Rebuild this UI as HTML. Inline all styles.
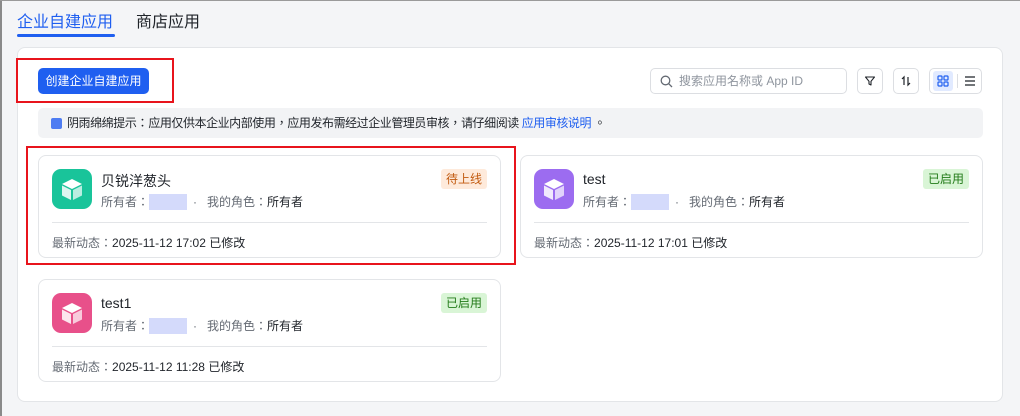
<!DOCTYPE html>
<html><head><meta charset="utf-8"><style>
*{box-sizing:border-box;margin:0;padding:0}
body{width:1020px;height:416px;background:#f4f5f7;font-family:"Liberation Sans","Noto Sans CJK TC",sans-serif;position:relative;overflow:hidden}
.a{position:absolute}
.p{display:inline-block;width:12px;text-align:center}
.tab{font-size:16px;top:8px}
.main{left:17px;top:47px;width:986px;height:355px;background:#fff;border:1px solid #e3e5e8;border-radius:8px}
.red{border:2px solid #e8141c}
.btn{left:38px;top:68px;width:111px;height:26px;background:#1f5ff0;border-radius:5px;color:#fff;font-size:12px;text-align:center;line-height:26px}
.sq{width:26px;height:26px;border:1px solid #dcdee2;border-radius:5px;background:#fff;display:flex;align-items:center;justify-content:center}
.card{width:463px;height:103px;border:1px solid #e3e5e8;border-radius:8px;background:#fff}
.ic{left:13px;top:13px;width:40px;height:40px;border-radius:9px;display:flex;align-items:center;justify-content:center}
.ttl{left:62px;top:15px;font-size:14px;color:#1f2329}
.own{left:62px;top:37px;font-size:12px;color:#646a73;display:flex;align-items:center;white-space:nowrap}
.blur{display:inline-block;width:38px;height:16px;background:#d4dafb;margin:0 6px 0 0}
.div{left:13px;right:13px;top:66px;height:1px;background:#e3e5e8}
.last{left:13px;top:78px;font-size:12px;color:#646a73;white-space:nowrap}
.last b{font-weight:normal;color:#1f2329}
.bd{right:13px;top:13px;height:20px;padding:0 5px;font-size:12px;line-height:20px;border-radius:3px}
</style></head><body>
<div class="a" style="left:0;top:0;width:2px;height:416px;background:#8a8a8a"></div>
<div class="a" style="left:0;top:0;width:1020px;height:1px;background:#9a9a9a"></div>
<div class="a tab" style="left:17px;color:#1f5ff0">企业自建应用</div>
<div class="a" style="left:17px;top:34px;width:98px;height:3px;background:#1f5ff0;border-radius:2px"></div>
<div class="a tab" style="left:136px;color:#1f2329">商店应用</div>
<div class="a main"></div>
<div class="a red" style="left:16px;top:58px;width:158px;height:45px"></div>
<div class="a btn">创建企业自建应用</div>
<div class="a" style="left:650px;top:68px;width:197px;height:26px;border:1px solid #dcdee2;border-radius:5px;font-size:12px;color:#8f959e;line-height:24px;padding-left:28px">
<svg class="a" style="left:9px;top:6px" width="13" height="13" viewBox="0 0 13 13"><circle cx="5.5" cy="5.5" r="4.3" fill="none" stroke="#646a73" stroke-width="1.3"/><path d="M8.7 8.7L12 12" stroke="#646a73" stroke-width="1.3"/></svg>搜索应用名称或 App ID</div>
<div class="a sq" style="left:857px;top:68px"><svg width="12" height="12" viewBox="0 0 12 12"><path d="M1.5 2h9L7 6.3V10L5 9V6.3z" fill="none" stroke="#1f2329" stroke-width="1.1" stroke-linejoin="round"/></svg></div>
<div class="a sq" style="left:893px;top:68px"><svg width="12" height="12" viewBox="0 0 12 12"><path d="M4 10V2L2 4M8 2v8l2-2" fill="none" stroke="#1f2329" stroke-width="1.2"/></svg></div>
<div class="a sq" style="left:929px;top:68px;width:53px;justify-content:flex-start;padding-left:3px">
<div style="width:20px;height:20px;background:#e1eaff;border-radius:3px;display:flex;align-items:center;justify-content:center"><svg width="12" height="12" viewBox="0 0 12 12"><g fill="none" stroke="#1f5ff0" stroke-width="1.2"><rect x="1" y="1" width="4" height="4" rx=".8"/><rect x="7" y="1" width="4" height="4" rx=".8"/><rect x="1" y="7" width="4" height="4" rx=".8"/><rect x="7" y="7" width="4" height="4" rx=".8"/></g></svg></div>
<div style="width:1px;height:14px;background:#dcdee2;margin:0 6px 0 4px"></div>
<svg width="12" height="12" viewBox="0 0 12 12"><path d="M1 2h10M1 6h10M1 10h10" stroke="#1f2329" stroke-width="1.2"/></svg></div>
<div class="a" style="left:38px;top:108px;width:945px;height:30px;background:#f2f3f5;border-radius:5px;font-size:12px;color:#1f2329;line-height:30px;padding-left:29px;white-space:nowrap;letter-spacing:-0.45px">
<div class="a" style="left:13px;top:10px;width:11px;height:11px;background:#4e7cf2;border-radius:2px"></div>阴雨绵绵提示<span class="p">：</span>应用仅供本企业内部使用<span class="p">，</span>应用发布需经过企业管理员审核<span class="p">，</span>请仔细阅读 <span style="color:#1f5ff0">应用审核说明</span> 。</div>
<div class="a red" style="left:26px;top:146px;width:490px;height:119px"></div>

<div class="a card" style="left:38px;top:155px">
<div class="a ic" style="background:#19c49a"><svg width="26" height="26" viewBox="0 0 26 26"><path d="M13 3L23 8L13 13L3 8z" fill="#fff"/><path d="M3 9.5L12 14V24L3 19.5z" fill="#fff" opacity=".85"/><path d="M23 9.5L14 14V24L23 19.5z" fill="#fff" opacity=".7"/></svg></div>
<div class="a ttl">贝锐洋葱头</div>
<div class="a own">所有者<span class="p">：</span><span class="blur"></span>·&nbsp;&nbsp;&nbsp;我的角色<span class="p">：</span><span style="color:#1f2329">所有者</span></div>
<div class="a div"></div>
<div class="a last">最新动态<span class="p">：</span><b>2025-11-12 17:02 已修改</b></div>
<div class="a bd" style="background:#feeadb;color:#c25b10">待上线</div>
</div>
<div class="a card" style="left:520px;top:155px">
<div class="a ic" style="background:#9c6cf0"><svg width="26" height="26" viewBox="0 0 26 26"><path d="M13 3L23 8L13 13L3 8z" fill="#fff"/><path d="M3 9.5L12 14V24L3 19.5z" fill="#fff" opacity=".85"/><path d="M23 9.5L14 14V24L23 19.5z" fill="#fff" opacity=".7"/></svg></div>
<div class="a ttl">test</div>
<div class="a own">所有者<span class="p">：</span><span class="blur"></span>·&nbsp;&nbsp;&nbsp;我的角色<span class="p">：</span><span style="color:#1f2329">所有者</span></div>
<div class="a div"></div>
<div class="a last">最新动态<span class="p">：</span><b>2025-11-12 17:01 已修改</b></div>
<div class="a bd" style="background:#d9f5d6;color:#237b19">已启用</div>
</div>
<div class="a card" style="left:38px;top:279px">
<div class="a ic" style="background:#e8508a"><svg width="26" height="26" viewBox="0 0 26 26"><path d="M13 3L23 8L13 13L3 8z" fill="#fff"/><path d="M3 9.5L12 14V24L3 19.5z" fill="#fff" opacity=".85"/><path d="M23 9.5L14 14V24L23 19.5z" fill="#fff" opacity=".7"/></svg></div>
<div class="a ttl">test1</div>
<div class="a own">所有者<span class="p">：</span><span class="blur"></span>·&nbsp;&nbsp;&nbsp;我的角色<span class="p">：</span><span style="color:#1f2329">所有者</span></div>
<div class="a div"></div>
<div class="a last">最新动态<span class="p">：</span><b>2025-11-12 11:28 已修改</b></div>
<div class="a bd" style="background:#d9f5d6;color:#237b19">已启用</div>
</div>
</body></html>
